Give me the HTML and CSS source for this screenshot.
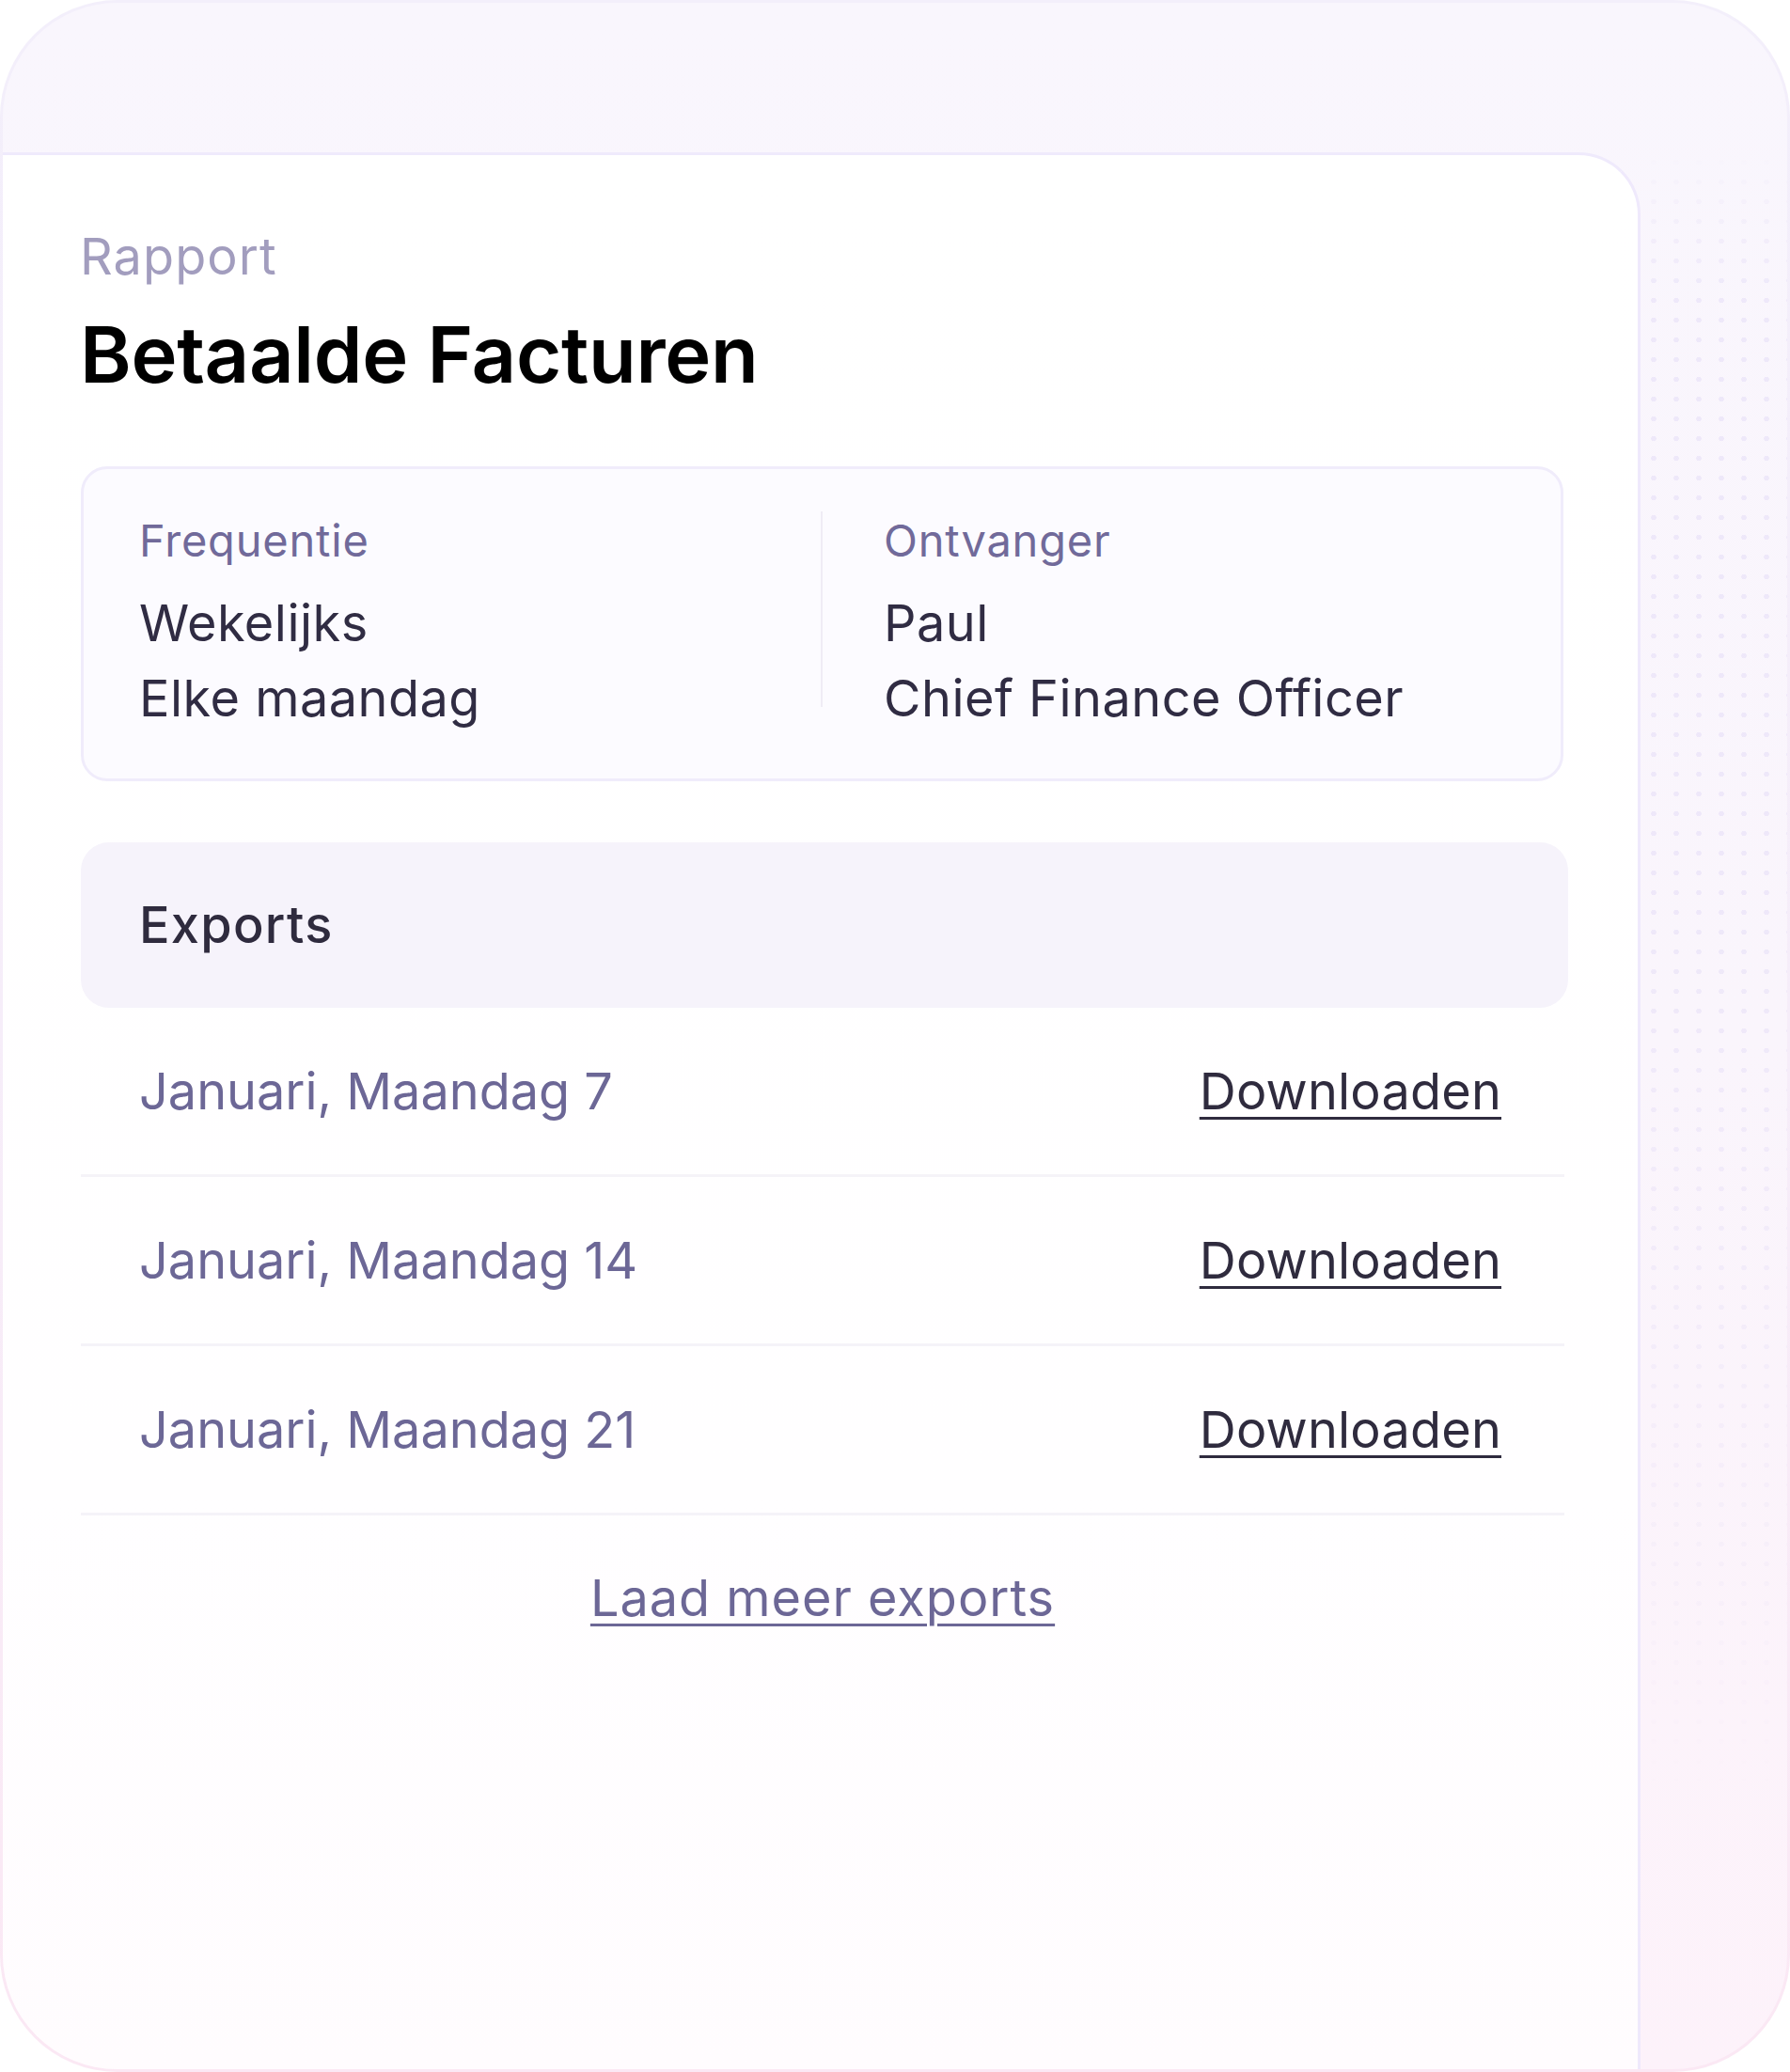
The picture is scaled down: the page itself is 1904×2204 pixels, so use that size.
FILE: index.html
```html
<!DOCTYPE html>
<html lang="nl">
<head>
<meta charset="utf-8">
<title>Betaalde Facturen</title>
<link rel="stylesheet" href="styles.css">
</head>
<body>
<div class="frame">
  <main class="card">
    <p class="eyebrow">Rapport</p>
    <h1 class="title">Betaalde Facturen</h1>

    <section class="info">
      <div class="info-col info-col-left">
        <p class="info-label">Frequentie</p>
        <p class="info-value">Wekelijks</p>
        <p class="info-value">Elke maandag</p>
      </div>
      <div class="info-divider"></div>
      <div class="info-col info-col-right">
        <p class="info-label">Ontvanger</p>
        <p class="info-value">Paul</p>
        <p class="info-value">Chief Finance Officer</p>
      </div>
    </section>

    <section class="exports">
      <div class="exports-head">Exports</div>
      <div class="export-row">
        <span class="export-date">Januari, Maandag 7</span>
        <a class="export-link" href="#">Downloaden</a>
      </div>
      <div class="export-row">
        <span class="export-date">Januari, Maandag 14</span>
        <a class="export-link" href="#">Downloaden</a>
      </div>
      <div class="export-row">
        <span class="export-date">Januari, Maandag 21</span>
        <a class="export-link" href="#">Downloaden</a>
      </div>
      <div class="load-more-wrap">
        <a class="load-more" href="#">Laad meer exports</a>
      </div>
    </section>
  </main>
  <div class="dots"></div>
</div>
</body>
</html>
```

FILE: styles.css
```css
* { box-sizing: border-box; }

html, body {
  margin: 0;
  padding: 0;
  background: #ffffff;
}

body {
  font-family: "Inter", "DejaVu Sans", sans-serif;
  width: 1904px;
  height: 2204px;
  overflow: hidden;
}

p { margin: 0; }

.frame {
  width: 1904px;
  height: 2204px;
  border: 3px solid transparent;
  border-radius: 125px;
  background:
    linear-gradient(180deg, #f9f6fd 0%, #faf5fc 50%, #fdf2fa 100%) padding-box,
    linear-gradient(180deg, #f3effb 0%, #f6edf9 50%, #fbe8f4 100%) border-box;
  overflow: hidden;
  display: flex;
  padding-top: 159px;
}

.card {
  width: 1742px;
  flex: 0 0 1742px;
  background: linear-gradient(180deg, #ffffff 0%, #fffeff 70%, #fffcfe 100%);
  border-top: 3px solid #efeafc;
  border-right: 3px solid #efe9fc;
  border-top-right-radius: 66px;
  padding: 76px 0 0 83px;
  display: flex;
  flex-direction: column;
}

.eyebrow {
  font-size: 54px;
  line-height: 64px;
  color: #a29dbe;
  font-weight: 400;
  letter-spacing: 1.1px;
  margin-left: -1px;
}

.title {
  margin: 22px 0 0 -1px;
  font-size: 83px;
  line-height: 100px;
  font-weight: 600;
  color: #000000;
  letter-spacing: -0.3px;
}

.info {
  margin-top: 69px;
  width: 1577px;
  border: 3px solid #f0ecfb;
  border-radius: 28px;
  background: #fcfbff;
  padding: 48px 0 45px 59px;
  display: flex;
  align-items: flex-start;
}

.info-col-left { width: 725px; }
.info-col-right { padding-left: 65px; }

.info-divider {
  width: 2px;
  height: 208px;
  margin-top: -3px;
  background: #efecf5;
}

.info-label {
  font-size: 47px;
  line-height: 56px;
  color: #716a9a;
  letter-spacing: 0.8px;
  margin-bottom: 20px;
}

.info-value {
  font-size: 54px;
  line-height: 80px;
  color: #302c43;
  letter-spacing: 0.5px;
}

.exports {
  margin: 65px 0 0 0;
  width: 1582px;
  display: flex;
  flex-direction: column;
}

.exports-head {
  width: 1582px;
  height: 176px;
  background: #f6f3fb;
  border-radius: 30px;
  padding: 56px 0 0 62px;
  font-size: 54px;
  line-height: 64px;
  font-weight: 500;
  color: #2f2b3e;
  letter-spacing: 1.3px;
}

.export-row {
  width: 1578px;
  height: 180px;
  border-bottom: 3px solid #f5f3f8;
  display: flex;
  align-items: center;
  justify-content: space-between;
  padding: 0 67px 0 62px;
  font-size: 54px;
  line-height: 64px;
}

.export-date {
  color: #6c6796;
  letter-spacing: 0px;
}

.export-link {
  color: #2f2b3e;
  letter-spacing: 0.2px;
  text-decoration: underline;
  text-decoration-thickness: 3px;
  text-underline-offset: 8px;
}

.load-more-wrap {
  width: 1578px;
  margin-top: 56px;
  text-align: center;
  font-size: 54px;
  line-height: 64px;
  letter-spacing: 1px;
}

.load-more {
  color: #6c6796;
  text-decoration: underline;
  text-decoration-thickness: 3px;
  text-underline-offset: 8px;
}

.dots {
  flex: 1 1 auto;
  background-image: radial-gradient(circle, rgba(226, 218, 246, 0.5) 2.5px, transparent 3px);
  background-size: 24px 21px;
  background-position: 26px 0;
  -webkit-mask-image: linear-gradient(180deg, transparent 0%, #000 8%, #000 40%, rgba(0,0,0,0.4) 70%, transparent 85%);
  mask-image: linear-gradient(180deg, transparent 0%, #000 8%, #000 40%, rgba(0,0,0,0.4) 70%, transparent 85%);
}
```
